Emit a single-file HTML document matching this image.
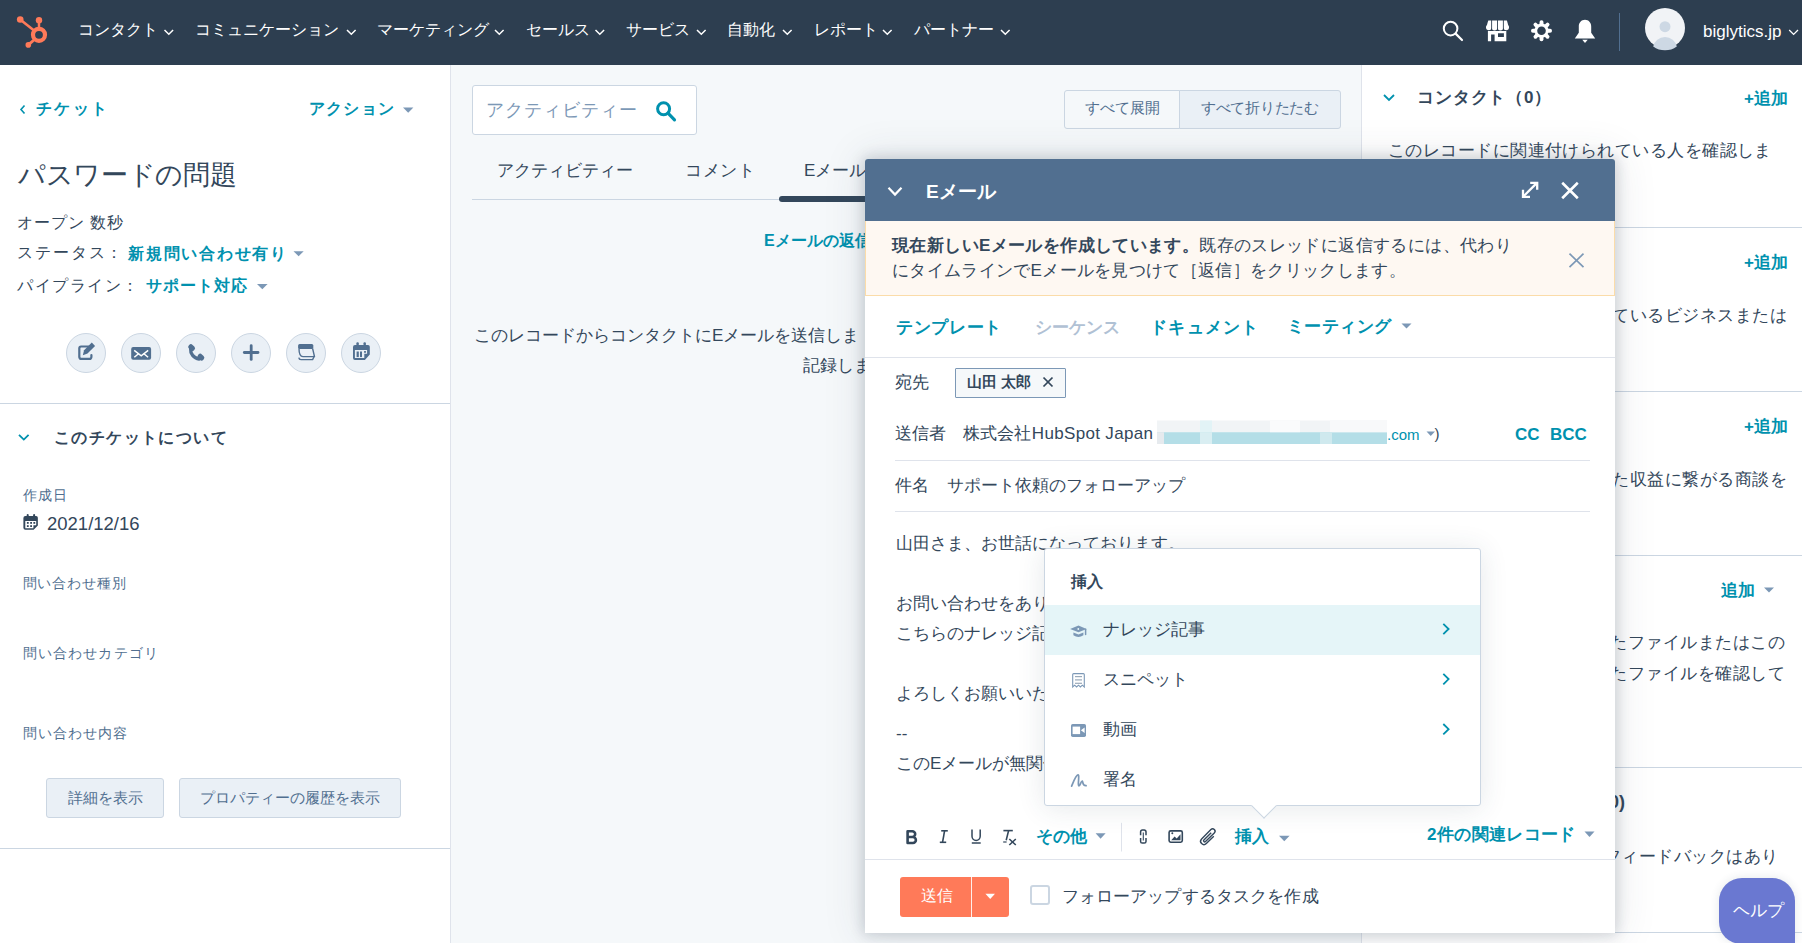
<!DOCTYPE html>
<html lang="ja">
<head>
<meta charset="utf-8">
<style>
*{box-sizing:border-box}
html,body{margin:0;padding:0;width:1802px;height:943px;overflow:hidden;background:#fff;font-family:"Liberation Sans",sans-serif;color:#33475b}
.a{position:absolute}
.t{position:absolute;white-space:nowrap;line-height:1}
.tr{position:absolute;white-space:nowrap;line-height:1;text-align:right}
.nv{position:absolute;top:22px;font-size:16px;line-height:1;color:#fff;white-space:nowrap}
.teal{color:#0091ae}
.b{font-weight:bold}
.circ{position:absolute;top:333px;width:40px;height:40px;border-radius:50%;background:#eaf0f6;border:1px solid #cbd6e2}
.hr{position:absolute;height:1px;background:#cbd6e2}
.caret{position:absolute;width:0;height:0;border-left:5px solid transparent;border-right:5px solid transparent;border-top:5px solid #7c98b6}
.lbl{color:#516f90;font-size:14px}
.btn{position:absolute;background:#eaf0f6;border:1px solid #cbd6e2;border-radius:3px;color:#516f90;font-size:15px;text-align:center;line-height:1}
.rt{position:absolute;white-space:nowrap;line-height:1;font-size:17px}
</style>
</head>
<body>
<!-- NAV -->
<div class="a" style="left:0;top:0;width:1802px;height:65px;background:#2d3e50"></div>
<svg class="a" style="left:0;top:0" width="60" height="65" viewBox="0 0 60 65">
  <g fill="#ff7a59" stroke="#ff7a59">
    <circle cx="39" cy="34.8" r="6" fill="none" stroke-width="4.2"/>
    <circle cx="20.2" cy="19.5" r="3.3" stroke="none"/>
    <circle cx="39" cy="20.3" r="3.2" stroke="none"/>
    <circle cx="28.3" cy="44.9" r="2.8" stroke="none"/>
    <line x1="20.2" y1="19.5" x2="34" y2="30.5" stroke-width="2.6"/>
    <line x1="39" y1="21" x2="39" y2="28" stroke-width="2.5"/>
    <line x1="28.3" y1="44.9" x2="34.5" y2="39.5" stroke-width="2.8"/>
  </g>
</svg>
<div class="nv" style="left:78px">コンタクト</div>
<div class="nv" style="left:195px">コミュニケーション</div>
<div class="nv" style="left:377px">マーケティング</div>
<div class="nv" style="left:526px">セールス</div>
<div class="nv" style="left:626px">サービス</div>
<div class="nv" style="left:727px">自動化</div>
<div class="nv" style="left:814px">レポート</div>
<div class="nv" style="left:914px">パートナー</div>
<svg class="a" style="left:0;top:0" width="1802" height="65" viewBox="0 0 1802 65">
  <g fill="none" stroke="#fff" stroke-width="1.5">
    <polyline points="164.5,30 168.8,34.3 173.1,30"/>
    <polyline points="347,30 351.3,34.3 355.6,30"/>
    <polyline points="495,30 499.3,34.3 503.6,30"/>
    <polyline points="595.5,30 599.8,34.3 604.1,30"/>
    <polyline points="697,30 701.3,34.3 705.6,30"/>
    <polyline points="783,30 787.3,34.3 791.6,30"/>
    <polyline points="883,30 887.3,34.3 891.6,30"/>
    <polyline points="1001,30 1005.3,34.3 1009.6,30"/>
    <polyline points="1789.2,30 1793.6,34.4 1798,30" stroke-width="1.3"/>
  </g>
  <!-- search -->
  <g fill="none" stroke="#fff">
    <circle cx="1450.6" cy="28.6" r="6.8" stroke-width="2"/>
    <line x1="1455.6" y1="33.6" x2="1462" y2="40" stroke-width="2.2" stroke-linecap="round"/>
  </g>
  <!-- store -->
  <g fill="#fff">
    <path d="M1488.3 20.4H1506.9L1509 28H1486z"/>
    <circle cx="1488.8" cy="27.6" r="2.75"/><circle cx="1494.55" cy="27.6" r="2.85"/><circle cx="1500.45" cy="27.6" r="2.85"/><circle cx="1506.2" cy="27.6" r="2.75"/>
    <path d="M1487.9 31H1506.3V41.3H1487.9zM1491.1 34.4V41.3H1494.6V34.4zM1498 33.3V36.9H1503.9V33.3z" fill-rule="evenodd"/>
  </g>
  <g stroke="#2d3e50" stroke-width=".9">
    <line x1="1491.6" y1="20" x2="1491.6" y2="30.5"/><line x1="1497.5" y1="20" x2="1497.5" y2="30.5"/><line x1="1503.4" y1="20" x2="1503.4" y2="30.5"/>
  </g>
  <!-- gear -->
  <g transform="translate(1541.5 30.7)" fill="#fff">
    <circle r="7.1"/>
    <g id="tooth"><rect x="-1.95" y="-10.5" width="3.9" height="6" rx="1.9"/></g>
    <rect x="-1.95" y="-10.5" width="3.9" height="6" rx="1.9" transform="rotate(45)"/>
    <rect x="-1.95" y="-10.5" width="3.9" height="6" rx="1.9" transform="rotate(90)"/>
    <rect x="-1.95" y="-10.5" width="3.9" height="6" rx="1.9" transform="rotate(135)"/>
    <rect x="-1.95" y="-10.5" width="3.9" height="6" rx="1.9" transform="rotate(180)"/>
    <rect x="-1.95" y="-10.5" width="3.9" height="6" rx="1.9" transform="rotate(225)"/>
    <rect x="-1.95" y="-10.5" width="3.9" height="6" rx="1.9" transform="rotate(270)"/>
    <rect x="-1.95" y="-10.5" width="3.9" height="6" rx="1.9" transform="rotate(315)"/>
    <circle r="4.3" fill="#2d3e50"/>
  </g>
  <!-- bell -->
  <g fill="#fff">
    <path d="M1585 19.8c-3.6 0-6.2 2.9-6.2 6.7v6.3l-4 5.6h20.4l-4-5.6v-6.3c0-3.8-2.6-6.7-6.2-6.7z"/>
    <path d="M1582.3 39.8h5.4l-2.7 3.3z"/>
  </g>
  <line x1="1619.5" y1="13" x2="1619.5" y2="51" stroke="#516f90" stroke-width="1"/>
  <circle cx="1665" cy="28" r="20" fill="#f1f3f6"/>
  <circle cx="1665" cy="26.7" r="5.5" fill="#cdd8e4"/>
  <path d="M1653.2 46.5a12 11.5 0 0 1 23.6 0a20 20 0 0 1-23.6 0z" fill="#cdd8e4"/>
</svg>
<div class="nv" style="left:1703px;top:22.5px;font-size:17px">biglytics.jp</div>

<!-- LEFT PANEL -->
<div class="a" style="left:450px;top:65px;width:1px;height:878px;background:#dfe3eb"></div>
<div class="circ" style="left:66px"></div>
<div class="circ" style="left:121px"></div>
<div class="circ" style="left:176px"></div>
<div class="circ" style="left:231px"></div>
<div class="circ" style="left:286px"></div>
<div class="circ" style="left:341px"></div>
<svg class="a" style="left:0;top:0" width="450" height="943" viewBox="0 0 450 943">
  <polyline points="24.5,105.5 21,109.5 24.5,113.5" fill="none" stroke="#0091ae" stroke-width="1.6"/>
  <polyline points="19,434.8 23.8,439.6 28.6,434.8" fill="none" stroke="#0091ae" stroke-width="1.8"/>
  <!-- note -->
  <g fill="none" stroke="#516f90" stroke-width="2.2" stroke-linecap="round">
    <path d="M88.6 346.5H81.1a1.8 1.8 0 0 0-1.8 1.8V357.1a1.8 1.8 0 0 0 1.8 1.8H89.6a1.8 1.8 0 0 0 1.8-1.8V355"/>
  </g>
  <path d="M82.8 355.2L84.1 350.2L91.8 342.6L95.1 345.9L87.5 353.6z" fill="#516f90"/>
  <!-- mail -->
  <rect x="131.2" y="346.9" width="19.9" height="12.9" rx="2" fill="#516f90"/>
  <g fill="none" stroke="#fff" stroke-width="1.5">
    <polyline points="134.2,350.4 141.2,355.9 148.2,350.4"/>
    <line x1="134.3" y1="357.3" x2="138.8" y2="353.5"/><line x1="148.1" y1="357.3" x2="143.6" y2="353.5"/>
  </g>
  <!-- phone -->
  <g fill="#516f90">
    <path d="M190.6 348.6C190.2 353.6 193.6 358.2 199.2 359.1" fill="none" stroke="#516f90" stroke-width="3.3" stroke-linecap="round"/>
    <rect x="-2.6" y="-3.6" width="5.2" height="7.2" rx="2.4" transform="translate(191.6 347.6) rotate(-45)"/>
    <rect x="-2.6" y="-3.6" width="5.2" height="7.2" rx="2.4" transform="translate(200.9 357.1) rotate(-45)"/>
  </g>
  <!-- plus -->
  <g stroke="#516f90" stroke-width="2.8" stroke-linecap="round">
    <line x1="244.3" y1="352.5" x2="258" y2="352.5"/><line x1="251.2" y1="345.7" x2="251.2" y2="359.4"/>
  </g>
  <!-- tasks -->
  <rect x="298.1" y="344.1" width="15.2" height="4.8" rx="1.5" fill="#516f90"/>
  <g fill="none" stroke="#516f90" stroke-width="1.4" stroke-linejoin="round">
    <path d="M299 348.5C299 352 300 356.6 303 356.6H314.5L312.6 348.5"/>
    <path d="M298.8 357.6C299 359 299.6 359.6 301 359.6H312.6L314.5 355.8"/>
  </g>
  <!-- calendar -->
  <path d="M355 345H368a1.8 1.8 0 0 1 1.8 1.8V354.6L364.9 360.1H355a2 2 0 0 1-2-2V347a2 2 0 0 1 2-2z" fill="#516f90"/>
  <rect x="356.4" y="342.2" width="2.4" height="3.5" rx="1" fill="#516f90"/>
  <rect x="363.5" y="342.2" width="2.4" height="3.5" rx="1" fill="#516f90"/>
  <path d="M354.9 349.9H367.1V353.8H364.3V358H354.9z" fill="#eaf0f6"/>
  <rect x="356.6" y="351.5" width="2.2" height="5.6" fill="#516f90"/>
  <rect x="360" y="351.5" width="2" height="5.6" fill="#516f90"/>
  <rect x="364.1" y="351" width="1.8" height="1.8" fill="#516f90"/>
  <!-- date calendar -->
  <path d="M25.4 515.9H36a1.8 1.8 0 0 1 1.85 1.8V525.6L33.6 529.85H25.4a2 2 0 0 1-2-2V517.9a2 2 0 0 1 2-2z" fill="#33475b"/>
  <rect x="26.7" y="514.1" width="2" height="3" rx="1" fill="#33475b"/>
  <rect x="33.1" y="514.1" width="2" height="3" rx="1" fill="#33475b"/>
  <path d="M25.3 520.9H36.2V525.3H33.4V528.3H25.3z" fill="#fff"/>
  <g fill="#33475b"><rect x="26.9" y="522" width="1.8" height="1.8"/><rect x="30.2" y="522" width="1.8" height="1.8"/><rect x="33.4" y="522" width="1.8" height="1.8"/><rect x="26.9" y="525.2" width="1.8" height="1.8"/><rect x="30.2" y="525.2" width="1.8" height="1.8"/></g>
  <!-- carets -->
  <g fill="#7c98b6">
    <path d="M403 107.5h10.4l-5.2 5.2z"/>
    <path d="M293.5 251.2h10.2l-5.1 5z"/>
    <path d="M257 284h10.6l-5.3 5.2z"/>
  </g>
</svg>
<div class="t teal b" style="left:36px;top:101px;font-size:16px;letter-spacing:2.3px">チケット</div>
<div class="t teal b" style="left:309px;top:101px;font-size:16px;letter-spacing:1.2px">アクション</div>
<div class="t" style="left:18px;top:162px;font-size:27px;letter-spacing:-0.35px">パスワードの問題</div>
<div class="t" style="left:17px;top:215px;font-size:16px;letter-spacing:0.9px">オープン 数秒</div>
<div class="t" style="left:17px;top:245px;font-size:16px;letter-spacing:1.9px">ステータス：</div>
<div class="t teal b" style="left:128px;top:245.5px;font-size:16px;letter-spacing:1.75px">新規問い合わせ有り</div>
<div class="t" style="left:17px;top:278px;font-size:16px;letter-spacing:1.5px">パイプライン：</div>
<div class="t teal b" style="left:145.5px;top:278px;font-size:16px;letter-spacing:1.2px">サポート対応</div>
<div class="hr" style="left:0;top:403px;width:450px"></div>
<div class="t b" style="left:54px;top:429.5px;font-size:16px;letter-spacing:1.4px">このチケットについて</div>
<div class="t lbl" style="left:22.5px;top:487.5px;letter-spacing:1.45px">作成日</div>
<div class="t" style="left:47px;top:514.5px;font-size:18.5px">2021/12/16</div>
<svg class="a" style="left:0;top:0;width:1px;height:1px"></svg>
<div class="t lbl" style="left:22.5px;top:576px;letter-spacing:0.85px">問い合わせ種別</div>
<div class="t lbl" style="left:22.5px;top:646px;letter-spacing:1.2px">問い合わせカテゴリ</div>
<div class="t lbl" style="left:22.5px;top:726px;letter-spacing:1.05px">問い合わせ内容</div>
<div class="btn" style="left:46px;top:778px;width:118px;height:40px;padding-top:11px">詳細を表示</div>
<div class="btn" style="left:179px;top:778px;width:222px;height:40px;padding-top:11px">プロパティーの履歴を表示</div>
<div class="hr" style="left:0;top:848px;width:450px"></div>

<!-- MIDDLE -->
<div class="a" style="left:451px;top:65px;width:910px;height:878px;background:#f5f8fa"></div>
<div class="a" style="left:472px;top:85px;width:225px;height:50px;background:#fff;border:1px solid #cbd6e2;border-radius:3px"></div>
<div class="t" style="left:486px;top:100.5px;font-size:18px;color:#7c98b6;letter-spacing:1px">アクティビティー</div>
<svg class="a" style="left:655px;top:100px" width="24" height="24" viewBox="0 0 24 24"><circle cx="8.6" cy="8.8" r="6" fill="none" stroke="#0091ae" stroke-width="3"/><line x1="13" y1="13.2" x2="19.5" y2="19.8" stroke="#0091ae" stroke-width="3.2" stroke-linecap="round"/></svg>
<div class="a" style="left:1064px;top:90px;width:116px;height:39px;background:#f5f8fa;border:1px solid #cbd6e2;border-radius:3px 0 0 3px"></div>
<div class="a" style="left:1179px;top:90px;width:162px;height:39px;background:#eaf0f6;border:1px solid #cbd6e2;border-radius:0 3px 3px 0"></div>
<div class="t" style="left:1085px;top:100px;font-size:15px;color:#516f90">すべて展開</div>
<div class="t" style="left:1201px;top:100px;font-size:15px;color:#516f90;letter-spacing:-0.3px">すべて折りたたむ</div>
<div class="t" style="left:497px;top:161.5px;font-size:17px">アクティビティー</div>
<div class="t" style="left:685px;top:161.5px;font-size:17px;letter-spacing:0.6px">コメント</div>
<div class="t" style="left:804px;top:161.5px;font-size:17px">Eメール</div>
<div class="hr" style="left:472px;top:199px;width:400px"></div>
<div class="a" style="left:779px;top:196px;width:100px;height:6px;background:#33475b;border-radius:3px"></div>
<div class="t teal b" style="left:764px;top:232.5px;font-size:16px">Eメールの返信</div>
<div class="t" style="left:474px;top:327px;font-size:17px">このレコードからコンタクトにEメールを送信しま</div>
<div class="t" style="left:803px;top:357px;font-size:17px">記録しま</div>

<!-- RIGHT -->
<div class="a" style="left:1361px;top:65px;width:1px;height:878px;background:#dfe3eb"></div>
<svg class="a" style="left:1361px;top:65px" width="441" height="878" viewBox="1361 65 441 878">
  <polyline points="1384,95 1389,100 1394,95" fill="none" stroke="#0091ae" stroke-width="1.8"/>
  <path d="M1764 587.5h10l-5 5z" fill="#7c98b6"/>
</svg>
<div class="t b" style="left:1417px;top:88.5px;font-size:17px;letter-spacing:0.85px">コンタクト（0）</div>
<div class="t teal b" style="left:1744px;top:90px;font-size:17px">+追加</div>
<div class="t" style="left:1388px;top:141.5px;font-size:17px;letter-spacing:0.45px">このレコードに関連付けられている人を確認しま</div>
<div class="hr" style="left:1362px;top:227px;width:440px"></div>
<div class="t teal b" style="left:1744px;top:254px;font-size:17px">+追加</div>
<div class="rt" style="right:15px;top:307px;letter-spacing:0.45px">関連付けられているビジネスまたは</div>
<div class="hr" style="left:1362px;top:391px;width:440px"></div>
<div class="t teal b" style="left:1744px;top:418px;font-size:17px">+追加</div>
<div class="rt" style="right:15px;top:471px;letter-spacing:0.45px">このレコードに関連した収益に繋がる商談を</div>
<div class="hr" style="left:1362px;top:555px;width:440px"></div>
<div class="t teal b" style="left:1720.5px;top:582px;font-size:17px">追加</div>
<div class="rt" style="right:17px;top:634px;letter-spacing:0.45px">このレコードに添付されたファイルまたはこの</div>
<div class="rt" style="right:17px;top:664.5px;letter-spacing:0.45px">ードに関連付けられたファイルを確認して</div>
<div class="hr" style="left:1362px;top:767px;width:440px"></div>
<div class="rt b" style="right:177px;top:793px;font-size:18px">バック（0)</div>
<div class="rt" style="right:23.5px;top:848px;letter-spacing:0.45px">このレコードに関するフィードバックはあり</div>
<div class="hr" style="left:1362px;top:932px;width:440px"></div>
<div class="a" style="left:1719px;top:878px;width:76px;height:66px;border-radius:23px 23px 0 22px;background:#6a78d1;box-shadow:0 0 10px rgba(45,62,80,.12)"></div>
<div class="t" style="left:1733px;top:902px;font-size:16.5px;color:#fff">ヘルプ</div>

<!-- MODAL -->
<div class="a" style="left:865px;top:159px;width:750px;height:774px;background:#fff;box-shadow:0 0 14px 2px rgba(45,62,80,.2),0 0 40px 4px rgba(45,62,80,.1);border-radius:3px 3px 0 0"></div>
<div class="a" style="left:865px;top:159px;width:750px;height:62px;background:#516f90;border-radius:3px 3px 0 0"></div>
<svg class="a" style="left:865px;top:159px" width="750" height="774" viewBox="865 159 750 774">
  <polyline points="888.5,187.8 895,194.6 901.5,187.8" fill="none" stroke="#fff" stroke-width="2.2"/>
  <g fill="none" stroke="#fff" stroke-width="2.3">
    <line x1="1523.8" y1="196" x2="1536.2" y2="183.6"/>
    <polyline points="1530.2,182.8 1537.2,182.8 1537.2,189.8"/>
    <polyline points="1523,189.8 1523,196.9 1530,196.9"/>
  </g>
  <g stroke="#fff" stroke-width="2.6"><line x1="1562.2" y1="182.8" x2="1577.8" y2="198.2"/><line x1="1577.8" y1="182.8" x2="1562.2" y2="198.2"/></g>
</svg>
<div class="t b" style="left:926px;top:181.5px;font-size:19px;color:#fff;letter-spacing:0.2px">Eメール</div>
<div class="a" style="left:865px;top:221px;width:750px;height:75px;background:#fef8f2;border:1px solid #fbdca9;border-top:none"></div>
<div class="t" style="left:892px;top:237px;font-size:17px;letter-spacing:0.38px"><b>現在新しいEメールを作成しています。</b>既存のスレッドに返信するには、代わり</div>
<div class="t" style="left:892px;top:262px;font-size:17px;letter-spacing:0.32px">にタイムラインでEメールを見つけて［返信］をクリックします。</div>
<svg class="a" style="left:1560px;top:245px" width="30" height="30" viewBox="1560 245 30 30"><g stroke="#7c98b6" stroke-width="1.7"><line x1="1569.5" y1="253.7" x2="1583.5" y2="267.2"/><line x1="1583.5" y1="253.7" x2="1569.5" y2="267.2"/></g></svg>
<div class="t teal b" style="left:896px;top:318.5px;font-size:17px;letter-spacing:0.7px">テンプレート</div>
<div class="t b" style="left:1035px;top:318.5px;font-size:17px;color:#b0c1d4">シーケンス</div>
<div class="t teal b" style="left:1150px;top:318.5px;font-size:17px;letter-spacing:1.3px">ドキュメント</div>
<div class="t teal b" style="left:1286.5px;top:317.5px;font-size:17px;letter-spacing:0.5px">ミーティング</div>
<div class="hr" style="left:865px;top:357px;width:750px;background:#dfe3eb"></div>
<div class="t" style="left:895px;top:374px;font-size:17px">宛先</div>
<div class="a" style="left:955px;top:368px;width:111px;height:30px;background:#f5f8fa;border:1px solid #7c98b6;border-radius:1px"></div>
<div class="t b" style="left:967px;top:374px;font-size:15px">山田 太郎</div>
<div class="t" style="left:895px;top:425px;font-size:17px">送信者</div>
<div class="t" style="left:962.5px;top:425px;font-size:17px;letter-spacing:0.33px">株式会社HubSpot Japan</div>
<svg class="a" style="left:865px;top:159px" width="750" height="774" viewBox="865 159 750 774">
  <g stroke="#33475b" stroke-width="1.7"><line x1="1043.5" y1="377.5" x2="1052.5" y2="386.5"/><line x1="1052.5" y1="377.5" x2="1043.5" y2="386.5"/></g>
  <!-- blurred email -->
  <g>
    <rect x="1157" y="420.5" width="230" height="11.7" fill="#f1f4f6"/>
    <rect x="1157" y="432.2" width="230" height="11.8" fill="#b4dee7"/>
    <rect x="1157" y="432.2" width="7" height="11.8" fill="#e6eaee"/>
    <rect x="1200" y="420.5" width="12" height="11.7" fill="#e2f3f6"/>
    <rect x="1200" y="432.2" width="12" height="11.8" fill="#d9eef2"/>
    <rect x="1270" y="420.5" width="30" height="11.7" fill="#fafbfc"/>
    <rect x="1330" y="420.5" width="57" height="11.7" fill="#f8f9fa"/>
    <rect x="1320" y="432.2" width="12" height="11.8" fill="#cfe9ee"/>
  </g>
  <path d="M1426.5 431.5h8.5l-4.25 4.5z" fill="#7c98b6"/>
  <path d="M1401.5 323.5h10l-5 5z" fill="#7c98b6"/>
  <!-- toolbar -->
  <g fill="none" stroke="#33475b">
    <path d="M907.6 831.2H912.3A2.9 2.9 0 0 1 912.3 837H907.6ZM907.6 837H912.9A3 3 0 0 1 912.9 843H907.6Z" stroke-width="2.6" stroke-linejoin="round"/>
    <g stroke-width="1.6"><line x1="941.2" y1="830.8" x2="947.8" y2="830.8"/><line x1="939.8" y1="842.3" x2="946.2" y2="842.3"/><line x1="944.6" y1="830.8" x2="942.5" y2="842.3"/></g>
    <g stroke-width="1.5"><path d="M972 829.5V836.3A4.1 4.1 0 0 0 980.2 836.3V829.5"/><line x1="971.8" y1="843" x2="980.7" y2="843"/></g>
    <g stroke-width="1.6"><line x1="1003.4" y1="830.6" x2="1012.8" y2="830.6"/><line x1="1008.6" y1="830.6" x2="1006.2" y2="840.3"/><line x1="1003.2" y1="842" x2="1006.6" y2="842" stroke-width="1.2"/><line x1="1009.3" y1="839" x2="1015.8" y2="845"/><line x1="1015.8" y1="839" x2="1009.3" y2="845"/></g>
    <g stroke-width="1.5"><path d="M1140.6 835.2V831.8A1.7 1.7 0 0 1 1142.3 830.1H1144.3A1.7 1.7 0 0 1 1146 831.8V835.2"/><path d="M1140.6 838V841.4A1.7 1.7 0 0 0 1142.3 843.1H1144.3A1.7 1.7 0 0 0 1146 841.4V838"/><line x1="1143.3" y1="832.6" x2="1143.3" y2="840.6" stroke-width="1.1"/></g>
    <rect x="1169.1" y="830.9" width="13.2" height="11.3" rx="1.6" stroke-width="1.6"/>
    <path d="M1213.8 836.3L1206.3 843.6A3.3 3.3 0 0 1 1201.6 838.9L1210.9 829.6A2.4 2.4 0 0 1 1214.3 833L1205.5 841.6A1.1 1.1 0 0 1 1203.9 840L1211.2 832.8" stroke-width="1.4"/>
  </g>
  <path d="M1171.2 840.3L1174.6 836.6L1176.7 838.5L1180.5 834.2V840.3Z" fill="#33475b"/>
  <circle cx="1172.3" cy="833.3" r="1" fill="#33475b"/>
  <path d="M1095.6 833.3h10l-5 5.5z" fill="#7c98b6"/>
  <path d="M1279 835.8h10.6l-5.3 5.5z" fill="#7c98b6"/>
  <path d="M1584.5 831.6h10l-5 5.3z" fill="#7c98b6"/>
  <line x1="1121.5" y1="822.8" x2="1121.5" y2="851.5" stroke="#dfe3eb" stroke-width="1"/>
</svg>
<div class="t teal" style="left:1387px;top:427px;font-size:15px">.com</div>
<div class="t" style="left:1434.5px;top:426px;font-size:15px">)</div>
<div class="t teal b" style="left:1515px;top:426px;font-size:17px">CC</div>
<div class="t teal b" style="left:1550px;top:426px;font-size:17px">BCC</div>
<div class="hr" style="left:895px;top:460px;width:695px;background:#dfe3eb"></div>
<div class="t" style="left:895px;top:477px;font-size:17px">件名</div>
<div class="t" style="left:947px;top:477px;font-size:17px">サポート依頼のフォローアップ</div>
<div class="hr" style="left:895px;top:511px;width:695px;background:#dfe3eb"></div>
<div class="t" style="left:896px;top:534.5px;font-size:17px">山田さま、お世話になっております。</div>
<div class="t" style="left:896px;top:594.5px;font-size:17px">お問い合わせをありがとうございます。</div>
<div class="t" style="left:896px;top:624.5px;font-size:17px">こちらのナレッジ記事をご参照いただけますと幸いです。</div>
<div class="t" style="left:896px;top:684.5px;font-size:17px">よろしくお願いいたします。</div>
<div class="t" style="left:896px;top:724.5px;font-size:17px">--</div>
<div class="t" style="left:896px;top:754.5px;font-size:17px">このEメールが無関係の方に送信された場合</div>
<div class="t teal b" style="left:1035.5px;top:828px;font-size:17px;letter-spacing:0.3px">その他</div>
<div class="t teal b" style="left:1234.5px;top:828px;font-size:17px">挿入</div>
<div class="t teal b" style="left:1427px;top:825.5px;font-size:17px;letter-spacing:0.38px">2件の関連レコード</div>
<div class="hr" style="left:865px;top:859px;width:750px;background:#dfe3eb"></div>
<div class="a" style="left:900px;top:877px;width:109px;height:40px;background:#ff7a59;border-radius:3px"></div>
<div class="a" style="left:971px;top:877px;width:1px;height:40px;background:rgba(255,255,255,.88)"></div>
<div class="t" style="left:921px;top:888px;font-size:16px;color:#fff">送信</div>
<svg class="a" style="left:980px;top:888px" width="20" height="20" viewBox="980 888 20 20"><path d="M985.4 893.8h9.6l-4.8 5.2z" fill="#fff"/></svg>
<div class="a" style="left:1030px;top:884.5px;width:20px;height:20px;border:2px solid #cbd6e2;border-radius:3px;background:#fff"></div>
<div class="t" style="left:1061.5px;top:888px;font-size:17px;letter-spacing:0.15px">フォローアップするタスクを作成</div>

<!-- INSERT DROPDOWN -->
<div class="a" style="left:1044px;top:548px;width:437px;height:258px;background:#fff;border:1px solid #cbd6e2;border-radius:3px;box-shadow:0 2px 28px rgba(45,62,80,.12)"></div>
<div class="a" style="left:1254.5px;top:797px;width:18px;height:18px;background:#fff;border-right:1px solid #cbd6e2;border-bottom:1px solid #cbd6e2;transform:rotate(45deg)"></div>
<div class="a" style="left:1045px;top:605px;width:435px;height:50px;background:#e5f5f8"></div>
<div class="t b" style="left:1070.5px;top:573.5px;font-size:16px">挿入</div>
<div class="t" style="left:1102.5px;top:621px;font-size:17px">ナレッジ記事</div>
<div class="t" style="left:1103px;top:671px;font-size:17px">スニペット</div>
<div class="t" style="left:1103px;top:721px;font-size:17px">動画</div>
<div class="t" style="left:1103px;top:771px;font-size:17px">署名</div>
<svg class="a" style="left:1044px;top:548px" width="437" height="258" viewBox="1044 548 437 258">
  <g fill="none" stroke="#0091ae" stroke-width="1.8">
    <polyline points="1443.3,623.8 1448.6,629 1443.3,634.2"/>
    <polyline points="1443.3,673.9 1448.6,679.1 1443.3,684.3"/>
    <polyline points="1443.3,724 1448.6,729.2 1443.3,734.4"/>
  </g>
  <g fill="#7c98b6">
    <path d="M1070.1 629L1078.5 625.6L1086.6 629L1078.5 632.3Z"/>
    <path d="M1073.4 632.4L1078.5 634.4L1083.4 632.4V635.2Q1078.5 638.8 1073.4 635.2Z"/>
    <line x1="1085.6" y1="629.3" x2="1085.6" y2="634.6" stroke="#7c98b6" stroke-width="1.5" stroke-linecap="round"/>
    <rect x="1071" y="723.9" width="15" height="13" rx="1.7"/>
  </g>
  <circle cx="1078.3" cy="629" r=".9" fill="#e5f5f8"/>
  <rect x="1072.6" y="726.6" width="7.5" height="7.5" fill="#fff"/>
  <path d="M1080.9 730.3L1084.6 727.6V733Z" fill="#fff"/>
  <g fill="none" stroke="#7c98b6" stroke-width="1.1">
    <path d="M1072.7 687V674.6A1 1 0 0 1 1073.7 673.6H1083.3A1 1 0 0 1 1084.3 674.6V687L1082.3 685.2L1080.4 687L1078.5 685.2L1076.6 687L1074.7 685.2Z"/>
  </g>
  <g stroke="#99a9b9" stroke-width="1.2"><line x1="1075" y1="676.6" x2="1082" y2="676.6"/><line x1="1075" y1="679.9" x2="1082" y2="679.9"/><line x1="1075" y1="683.3" x2="1082" y2="683.3"/></g>
  <path d="M1071.6 786.2C1073.2 782.5 1075.8 775.2 1078 774.9C1079.8 774.7 1077.4 785.8 1078.9 785.9C1080.3 786 1081 780.6 1082.3 781C1083.2 781.5 1082 785.9 1086.1 785.7" fill="none" stroke="#7c98b6" stroke-width="1.7" stroke-linecap="round"/>
</svg>
</body>
</html>
